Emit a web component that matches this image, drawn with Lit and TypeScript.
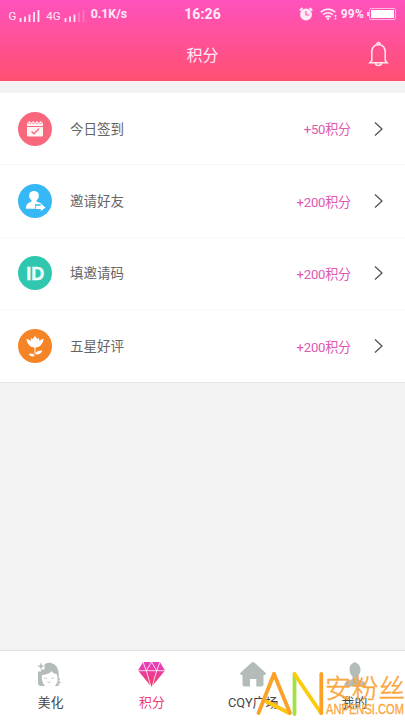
import { LitElement, html, css, svg } from "lit";
import { customElement } from "lit/decorators.js";

const calendar = svg`<circle cx="17" cy="17" r="17" fill="#f9677d"/>
  <path d="M9 14V11.500Q9 10 10.500 10H23.500Q25 10 25 11.500V14Z" fill="#fff4f4"/>
  <path d="M9 15h16v8q0 1.500-1.500 1.500h-13Q9 24.500 9 23Z" fill="#fff4f4"/>
  <g fill="#fff4f4" stroke="#f9677d" stroke-width=".6"><circle cx="11.500" cy="10.300" r="1.400"/><circle cx="15.200" cy="10.300" r="1.400"/><circle cx="18.900" cy="10.300" r="1.400"/><circle cx="22.600" cy="10.300" r="1.400"/></g>
  <path d="M13.500 19.500l2.500 2.300 5-5" fill="none" stroke="#f9677d" stroke-width="1.300"/>`;
const friend = svg`<circle cx="17" cy="17" r="17" fill="#35b8f5"/>
  <circle cx="16" cy="11.800" r="4.900" fill="#fff"/>
  <path d="M13.500 14.500h5v3c3 1 4.500 1.600 5.300 2.800H17v4.500H8c0-4 1-5.500 5.500-7.300Z" fill="#fff"/>
  <path d="M17.800 21.800h5V19.600l4.700 3.800-4.700 3.800v-2.200h-5Z" fill="#fff"/>`;
const idBadge = svg`<circle cx="17" cy="17" r="17" fill="#2fc7b0"/>
  <text x="8.200" y="23.600" textLength="18" lengthAdjust="spacingAndGlyphs" font-family="Liberation Sans, sans-serif" font-weight="700" font-size="19" fill="#f2fffc" stroke="#f2fffc" stroke-width=".4">ID</text>`;
const flower = svg`<circle cx="17" cy="17" r="17" fill="#f58426"/>
  <path d="M8.300 9.700q2.500.3 4.300 2.300 0-2 .9-3 .7.300 1.300 1.200.8-2 2.200-3.200 1.400 1.200 2.200 3.200.6-.9 1.300-1.200.9 1 .9 3 1.800-2 4.300-2.300-.4 3-2.300 5.800-2 3-6.400 3-4.500 0-6.400-3-1.900-2.800-2.300-5.800Z" fill="#fff"/>
  <path d="M17 18v7" stroke="#fff" stroke-width="1"/>
  <path d="M17.300 25.300q.5-4 7-3.800-1.500 4.500-7 3.800ZM16.800 27q-1.500-3.500-6.100-2 1.600 3.500 6.100 2Z" fill="#fff"/>`;

const beauty = svg`<path d="M7.500 2.300C11 .2 14 .2 17.500 2.600c4 3.500 4.500 8 4.300 12.900l1.200 2-1.500 6.500h-3.500C21 20 21 16 19.800 12.200c-2.500-.5-4-1.500-5-3C12 11.800 8.500 12.800 5 13c-.5 4 .2 8 3 11H4q-3 0-3-3V9.500h3V7.500h3.500Z" fill="#b4bcba"/>
  <path d="M3.900 0l1.100 3.100L8.200 4.200 5 5.300 3.900 8.400 2.800 5.300-.4 4.200 2.800 3.100ZM22 17.800l.8 1.900 1.900.8-1.900.8-.8 1.900-.8-1.900-1.900-.8 1.900-.8Z" fill="#b4bcba" stroke="#fff" stroke-width=".4"/>
  <path d="M7 16q1.500 1 3 0M14 16q1.500 1 3 0M10.500 20q1.500 1 3 0" fill="none" stroke="#b4bcba" stroke-width=".8"/>`;
const gem = svg`<defs><linearGradient id="g" x1="0" y1="0" x2="0" y2="1"><stop offset="0" stop-color="#e63fc0"/><stop offset="1" stop-color="#f13b68"/></linearGradient></defs>
  <path d="M5 0h17l5 8.500L13.500 25 0 8.500Z" fill="url(#g)"/>
  <path d="M0 8.700h27M5 0l3.300 8.700L13.500 0l5.200 8.700L22 0M8.300 8.700L13 25M18.700 8.700L14 25" fill="none" stroke="#fff" stroke-width=".8"/>`;
const house = svg`<path d="M11.700.5q1.300-1 2.600 0L25.300 10.500q1.400 2-.8 2.500H23.500V22.500q0 2-2 2H16.300V17H10v7.500H4.500q-2 0-2-2V13H1.500Q-.7 12.500.7 10.500Z" fill="#b4bcba"/>`;
const person = svg`<path d="M13.500 0c1 .8 6 1.500 6 7.500 0 3.500-1.500 5.500-3 7v2.500c3 1.500 7 1.500 8 5v2.500h-21V22c1-3.500 5-3.500 8-5v-2.500c-1.500-1.500-3-3.500-3-7C8.500 2 12 1.500 13.500 0Z" fill="#b4bcba"/>`;

const rows = [
  { icon: calendar, name: "今日签到", points: "+50积分" },
  { icon: friend, name: "邀请好友", points: "+200积分" },
  { icon: idBadge, name: "填邀请码", points: "+200积分" },
  { icon: flower, name: "五星好评", points: "+200积分" },
];
const tabs = [
  { icon: beauty, name: "美化", active: false },
  { icon: gem, name: "积分", active: true },
  { icon: house, name: "CQY广场", active: false },
  { icon: person, name: "我的", active: false },
];

@customElement("app-root")
export class AppRoot extends LitElement {
  static styles = css`
    :host { display: flex; flex-direction: column; position: relative; box-sizing: border-box; width: 405px; height: 720px; overflow: hidden; background: #f3f3f3; font-family: Roboto, "Noto Sans CJK SC", sans-serif; color: #666; }
    svg { display: block; overflow: visible; flex: none; }
    .header { height: 81px; background: linear-gradient(#ff52bd, #ff5070); color: #ffeaf8; flex: none; }
    .status { height: 28px; display: grid; grid-template-columns: 1fr auto 1fr; align-items: center; font-weight: 700; font-size: 12.300px; }
    .left { display: flex; align-items: center; padding-left: 8.500px; }
    .net { font-size: 11.500px; font-weight: 400; padding-top: 3px; }
    .bars { margin: 0 6px 0 3px; }
    .bars.second { margin: 0 7px 0 3px; }
    .clock { font-size: 14px; letter-spacing: .1px; }
    .right { display: flex; align-items: center; justify-content: flex-end; padding-right: 9px; }
    .alarm { margin-right: 7px; }
    .wifi { margin-right: 4px; }
    .pct { margin-right: 3px; font-size: 12px; letter-spacing: .2px; }
    .title { height: 53px; display: grid; grid-template-columns: 1fr auto 1fr; align-items: center; font-size: 16px; }
    .bell { grid-column: 3; justify-self: end; margin: 0 17px 0 0; }
    .name-title { grid-column: 2; padding-bottom: 2px; }
    .list { margin-top: 12px; background: #fff; border-bottom: 1px solid #e4e4e4; flex: none; }
    .row { height: 72.350px; box-sizing: border-box; display: flex; align-items: center; padding: 0 22.500px 0 18px; border-bottom: 1px solid #f7f7f7; }
    .row:last-child { border-bottom: 0; }
    .label { margin-left: 18px; font-size: 13.500px; flex: 1; padding-bottom: 2px; }
    .points { color: #de58b1; font-size: 13.100px; letter-spacing: -.2px; margin-right: 22.500px; }
    .tabs { margin-top: auto; height: 70px; box-sizing: border-box; border-top: 1px solid #e2e2e2; background: #fff; display: grid; grid-template-columns: repeat(4, 1fr); flex: none; }
    .tab { display: flex; flex-direction: column; align-items: center; padding-top: 11px; font-size: 12.800px; line-height: 20px; color: #444; gap: 6px; }
    .tab.active { color: #ec3d73; }
    .mark { position: absolute; left: 255px; top: 668px; }
  `;

  render() {
    return html`
      <div class="header">
        <div class="status">
          <div class="left">
            <span class="net">G</span>
            <svg class="bars" width="21" height="13"><path d="M1.500 10v4M6 8.500v5.500M10.500 6.500v7.500M15 4v10M19.500 2v12" stroke="#ffeaf8" stroke-width="1.800"/></svg>
            <span class="net">4G</span>
            <svg class="bars second" width="20" height="13"><path d="M1.500 10v4M6 8.500v5.500M10.500 6.500v7.500" stroke="#ffeaf8" stroke-width="1.800"/><path d="M15 4v10M19.500 2v12" stroke="#ffeaf8" stroke-opacity=".25" stroke-width="1.800"/></svg>
            <span>0.1K/s</span>
          </div>
          <span class="clock">16:26</span>
          <div class="right">
            <svg class="alarm" width="14" height="14"><circle cx="7" cy="7.500" r="5.900" fill="#ffeaf8"/><path d="M.8 3.500L3.500 1M13.200 3.500L10.500 1" stroke="#ffeaf8" stroke-width="1.800"/><path d="M7 4v4h3.500" fill="none" stroke="#ff55ad" stroke-width="1.200"/></svg>
            <svg class="wifi" width="17" height="12"><path d="M.7 4.200Q8 -2 15.300 4.200M3 6.700q5-4 10 0M5.300 9.200q2.700-2.200 5.400 0" fill="none" stroke="#ffeaf8" stroke-width="1.600"/><circle cx="8" cy="10.800" r="1.200" fill="#ffeaf8"/><path d="M15.500 7v4.500" stroke="#ffeaf8" stroke-width="1.500" stroke-dasharray="1.800 .9"/></svg>
            <span class="pct">99%</span>
            <svg width="29" height="12"><rect x="2.500" y=".5" width="26" height="11" rx="1.500" fill="none" stroke="#ffb5e2"/><rect x="4" y="2" width="23" height="8" fill="#fff"/><path d="M1 4v4" stroke="#ffeaf8" stroke-width="1.700"/></svg>
          </div>
        </div>
        <div class="title">
          <span class="name-title">积分</span>
          <svg class="bell" width="19" height="25" fill="none" stroke="#ffeaf2" stroke-width="1.500"><path d="M2.800 18.500V10Q3 3 9.500 2.500 16 3 16.200 10v8.500l2 2.200H.8ZM8 2.600q0-2.100 1.500-2.100T11 2.600M6.500 21q0 2.500 3 2.500t3-2.500"/></svg>
        </div>
      </div>
      <div class="list">
        ${rows.map((r) => html`<div class="row">
          <svg width="34" height="34" viewBox="0 0 34 34">${r.icon}</svg>
          <span class="label">${r.name}</span>
          <span class="points">${r.points}</span>
          <svg width="9" height="14"><path d="M1 .5l7 6.500-7 6.500" fill="none" stroke="#555" stroke-width="1.300"/></svg>
        </div>`)}
      </div>
      <div class="tabs">
        ${tabs.map((t) => html`<div class="tab ${t.active ? "active" : ""}">
          <svg width="27" height="25" viewBox="0 0 27 25">${t.icon}</svg>
          <span>${t.name}</span>
        </div>`)}
      </div>
      <svg class="mark" width="150" height="52" fill="none" stroke-width="3.800" stroke-linecap="round">
        <path d="M11.500 33.500L34 45" stroke="#ffc60d"/>
        <path d="M3.500 45L19 6" stroke="#fba127"/>
        <path d="M19 6L35 45" stroke="#fba127"/>
        <path d="M39.500 6V46" stroke="#a4e244"/>
        <path d="M39.500 6L66 45" stroke="#fccb0b"/>
        <path d="M66.300 6V45" stroke="#fba127"/>
        <g fill="#fba63b" stroke="none">
          <text x="70" y="30" font-family="Noto Sans CJK SC, sans-serif" font-weight="300" font-size="26.500" textLength="80" stroke="#fba63b" stroke-width=".5">安粉丝</text>
          <text x="71" y="46" font-family="Liberation Sans, sans-serif" font-size="14" textLength="78" lengthAdjust="spacingAndGlyphs" stroke="#fba63b" stroke-width=".3">ANPENSI.COM</text>
        </g>
      </svg>
    `;
  }
}
